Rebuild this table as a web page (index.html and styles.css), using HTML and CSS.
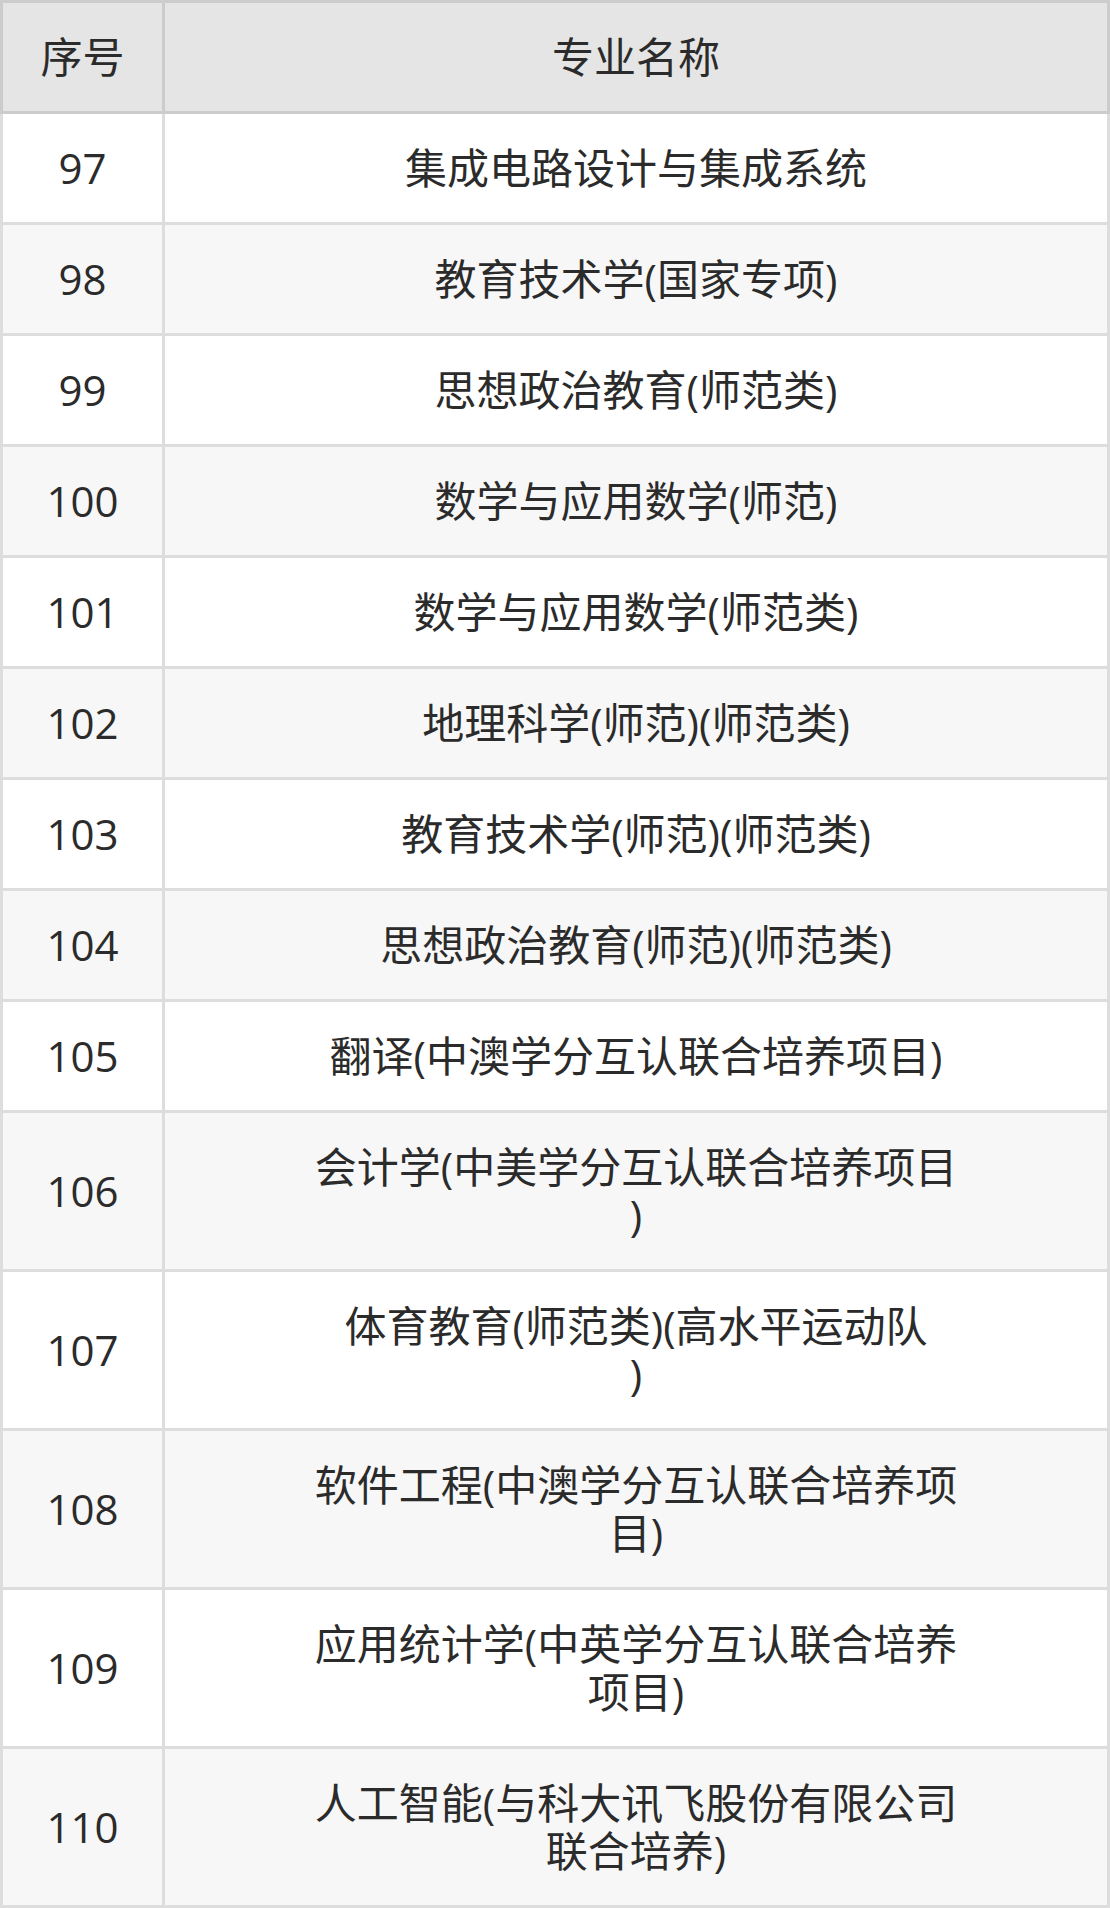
FILE: index.html
```html
<!DOCTYPE html>
<html lang="zh-CN">
<head>
<meta charset="utf-8">
<title>专业名称</title>
<link rel="stylesheet" href="styles.css">
</head>
<body>
<table class="major-table">
  <colgroup>
    <col class="col-no">
    <col class="col-name">
  </colgroup>
  <thead>
    <tr><th>序号</th><th>专业名称</th></tr>
  </thead>
  <tbody>
    <tr><td>97</td><td>集成电路设计与集成系统</td></tr>
    <tr><td>98</td><td>教育技术学(国家专项)</td></tr>
    <tr><td>99</td><td>思想政治教育(师范类)</td></tr>
    <tr><td>100</td><td>数学与应用数学(师范)</td></tr>
    <tr><td>101</td><td>数学与应用数学(师范类)</td></tr>
    <tr><td>102</td><td>地理科学(师范)(师范类)</td></tr>
    <tr><td>103</td><td>教育技术学(师范)(师范类)</td></tr>
    <tr><td>104</td><td>思想政治教育(师范)(师范类)</td></tr>
    <tr><td>105</td><td>翻译(中澳学分互认联合培养项目)</td></tr>
    <tr><td>106</td><td>会计学(中美学分互认联合培养项目<br>)</td></tr>
    <tr><td>107</td><td>体育教育(师范类)(高水平运动队<br>)</td></tr>
    <tr><td>108</td><td>软件工程(中澳学分互认联合培养项<br>目)</td></tr>
    <tr><td>109</td><td>应用统计学(中英学分互认联合培养<br>项目)</td></tr>
    <tr><td>110</td><td>人工智能(与科大讯飞股份有限公司<br>联合培养)</td></tr>
  </tbody>
</table>
</body>
</html>
```
FILE: styles.css
```css
html, body {
  margin: 0;
  padding: 0;
  background: #ffffff;
}

.major-table {
  width: 1110px;
  table-layout: fixed;
  border-collapse: separate;
  border-spacing: 0;
  font-family: "Open Sans", "Noto Sans CJK SC", sans-serif;
  font-size: 42px;
  line-height: 48px;
  color: #2b2b2b;
}

.col-no {
  width: 165px;
}

.major-table th,
.major-table td {
  box-sizing: border-box;
  padding: 30px 0;
  text-align: center;
  vertical-align: middle;
  font-weight: 400;
  border-right: 3px solid #dddddd;
  border-bottom: 3px solid #dddddd;
}

.major-table th:first-child,
.major-table td:first-child {
  border-left: 3px solid #dddddd;
}

.major-table th {
  background: #e5e5e5;
  border-top: 3px solid #cccccc;
  border-right-color: #cccccc;
  border-bottom-color: #cccccc;
}

.major-table th:first-child {
  border-left-color: #cccccc;
}

.major-table tbody tr:nth-child(odd) td {
  background: #ffffff;
}

.major-table tbody tr:nth-child(even) td {
  background: #f7f7f7;
}
```
